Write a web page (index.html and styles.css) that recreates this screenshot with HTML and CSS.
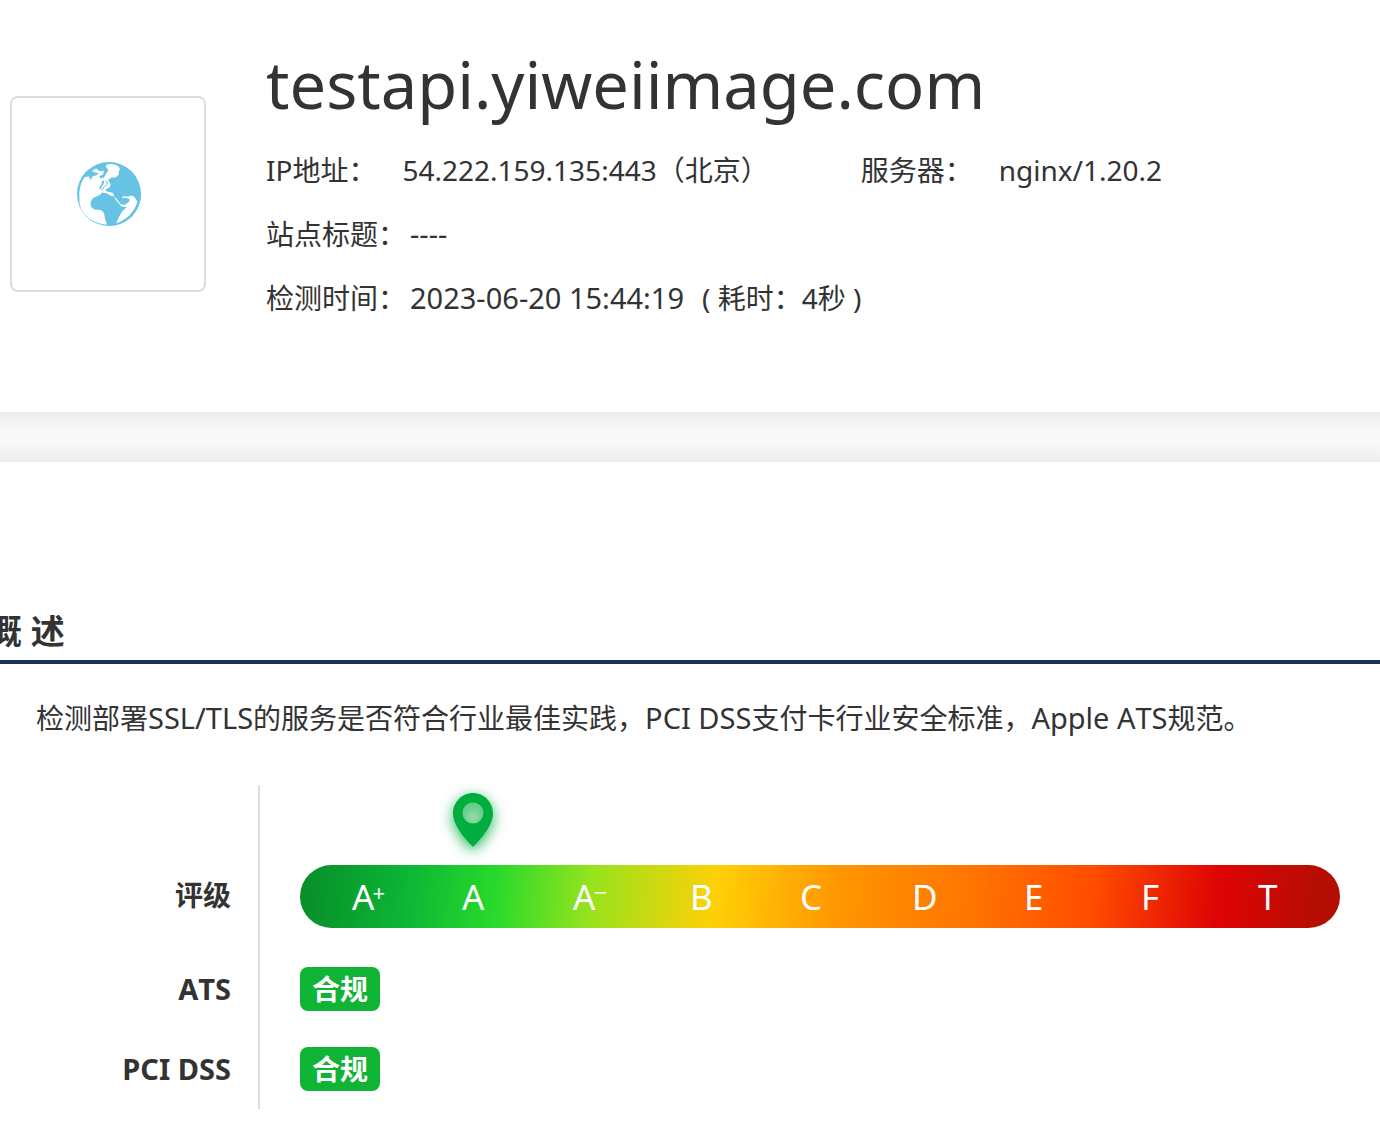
FILE: index.html
```html
<!DOCTYPE html>
<html lang="zh-CN">
<head>
<meta charset="utf-8">
<meta name="viewport" content="width=device-width, initial-scale=1">
<title>testapi.yiweiimage.com</title>
<link rel="stylesheet" href="styles.css">
</head>
<body>
<header class="panel site">
  <div class="site-icon">
    <svg class="globe" viewBox="0 0 64 64" role="img" aria-label="网站图标">
      <circle cx="32" cy="32" r="32" fill="#67c3e4"/>
      <path fill="#fff" d="M2.500 36C1.500 26 5 18.500 8 15L12 14.500L13.500 18L16 14L19 13.500L22 11L18 10.500L15 9L19 6.500L21.500 8.500L24 9.500L27 8.500L26 12.500L22 14.500L24 16.500L27 15.500L29.500 11L31.500 8L29.500 6L29 3L33 2L38 2.500L41.500 4.500L43 7L42 9L41.500 13L38.500 15.500L34.500 15.500L31 18L33.500 22L33 25L28 28L30 29.500L36 31L37.500 34.500L34 34L30.500 31.500L24.500 30.500L24 32L20.500 34L16 36L13.500 40L14 45L17.500 47.500L24 48L27 51L28 57L30 62.500C14 62 1 50 2.500 36Z"/>
      <path fill="#67c3e4" d="M25 19L27.500 18.500L26.500 22L23 28L22.500 25L24.500 22.500Z"/>
      <path fill="none" stroke="#67c3e4" stroke-width="1" d="M29 19L30.500 22L27 25L24.500 28"/>
      <path fill="#fff" d="M39 62C41 57 42.500 53 46 48.500L50 45L44.500 44.500L41.500 41L37 35.500L39 36L43.500 42L47 43L51.500 40.500L53 37.500L50 36L45 36L45.500 34.500L51 34.500L55 33.500L57.500 35L60.500 40L61.500 36C61 49 52 60 39 62Z"/>
      <path fill="#67c3e4" d="M62 30.500L64 30.500C64.500 49 50 64 32 64L31 62.500C48 62 61 49 62 30.500Z"/>
    </svg>
  </div>
  <div class="site-info">
    <h1 class="site-name">testapi.yiweiimage.com</h1>
    <dl class="facts">
      <div class="fact-row">
        <div class="fact fact-wide"><dt>IP地址：</dt><dd>54.222.159.135:443（北京）</dd></div>
        <div class="fact fact-wide"><dt>服务器：</dt><dd>nginx/1.20.2</dd></div>
      </div>
      <div class="fact-row">
        <div class="fact"><dt>站点标题：</dt><dd class="latin">----</dd></div>
      </div>
      <div class="fact-row">
        <div class="fact"><dt>检测时间：</dt><dd class="checked"><time class="latin" datetime="2023-06-20T15:44:19">2023-06-20 15:44:19</time><span>( 耗时：4秒 )</span></dd></div>
      </div>
    </dl>
  </div>
</header>

<main class="panel overview">
  <h2 class="section-title">概 述</h2>
  <p class="summary">检测部署<span class="latin">SSL/TLS</span>的服务是否符合行业最佳实践，<span class="latin">PCI DSS</span>支付卡行业安全标准，<span class="latin">Apple ATS</span>规范。</p>
  <dl class="results">
    <div class="result result-grade">
      <dt>评级</dt>
      <dd>
        <ol class="scale">
          <li>A<sup class="plus">+</sup></li>
          <li><span class="current">A
            <svg class="pin" viewBox="0 0 40 54" role="img" aria-label="当前评级">
              <path fill="#00ad3f" fill-rule="evenodd" d="M20 0C31 0 40 9 40 20.500C40 31 31 43 20 54C9 43 0 31 0 20.500C0 9 9 0 20 0ZM20 9.500A10.500 10.500 0 1 0 20 30.500A10.500 10.500 0 1 0 20 9.500Z"/>
              <circle cx="20" cy="20" r="10.500" fill="#00ad3f" fill-opacity=".15"/>
            </svg></span>
          </li>
          <li>A<sup class="minus">−</sup></li>
          <li>B</li>
          <li>C</li>
          <li>D</li>
          <li>E</li>
          <li>F</li>
          <li>T</li>
        </ol>
      </dd>
    </div>
    <div class="result"><dt class="latin">ATS</dt><dd><span class="badge">合规</span></dd></div>
    <div class="result"><dt class="latin">PCI DSS</dt><dd><span class="badge">合规</span></dd></div>
  </dl>
</main>
</body>
</html>
```
FILE: styles.css
```css
* {
  box-sizing: border-box;
}

body {
  margin: 0;
  background: #f9f9f9;
  color: #333;
  font-family: "Noto Sans", "Noto Sans CJK SC", sans-serif;
  font-size: 28px;
  line-height: 64px;
  overflow-x: hidden;
}

h1, h2, p, dl, dd, ol {
  margin: 0;
  padding: 0;
}

/* Latin runs are set a touch larger than the Chinese text around them */
.latin {
  font-size: 29px;
  font-kerning: none;
}

/* Panels bleed past both sides so that their shadow stays even */
.panel {
  margin: 0 -24px;
  background: #fff;
  box-shadow: 0 0 24px rgba(0, 0, 0, 0.11);
}

/* Site header */
.site {
  display: flex;
  align-items: flex-start;
  gap: 60px;
  margin-bottom: 50px;
  padding: 40px 34px 82px;
}

.site-icon {
  display: flex;
  flex: none;
  align-items: center;
  justify-content: center;
  width: 196px;
  height: 196px;
  margin-top: 56px;
  padding-left: 2px;
  border: 2px solid #ddd;
  border-radius: 8px;
}

.globe {
  width: 64px;
  height: 64px;
}

.site-name {
  margin-bottom: 10px;
  font-size: 65px;
  font-weight: 400;
  line-height: 88px;
}

.fact-row {
  display: flex;
  gap: 92px;
  height: 64px;
}

.fact {
  display: flex;
  gap: 4px;
  white-space: nowrap;
}

.fact-wide {
  gap: 26px;
}

.checked {
  display: flex;
  gap: 18px;
}

/* Overview */
.overview {
  padding: 140px 24px 60px;
}

.section-title {
  padding-left: 66px;
  border-bottom: 4px solid #1a2f5f;
  font-size: 34px;
  line-height: 58px;
  text-indent: -78px;
}

.summary {
  margin: 22px 36px 35px;
}

.result {
  display: flex;
}

.result dt {
  display: flex;
  flex: none;
  align-items: center;
  justify-content: flex-end;
  width: 260px;
  padding-right: 27px;
  border-right: 2px solid #ddd;
  font-weight: 700;
}

.result dd {
  display: flex;
  flex: 1;
  align-items: center;
  min-height: 80px;
  padding: 0 40px;
}

.result-grade dt {
  padding-top: 78px;
  padding-bottom: 22px;
}

.result-grade dd {
  padding-top: 80px;
  padding-bottom: 21px;
}

/* Column shares follow the uneven spacing of the grades on the colour bar */
.scale {
  display: grid;
  flex: 1;
  grid-template-columns: 110fr 111fr 117fr 110fr 112fr 112fr 117fr 117fr 82fr;
  height: 63px;
  padding-left: 52px;
  border-radius: 32px;
  background: linear-gradient(95deg, #08912a 1%, #0cb435 10%, #28da2b 19%, #96e31d 28%, #ffd006 40%, #ff9500 52%, #ff7300 65%, #ff4d00 76%, #df0404 88%, #b40e03 98%);
  color: #fff;
  font-size: 35px;
  line-height: 64px;
  list-style: none;
}

.scale sup {
  margin-left: -2px;
  font-size: 22px;
  line-height: 20px;
  vertical-align: 9px;
}

.scale .minus {
  font-size: 24px;
}

.current {
  display: inline-block;
  position: relative;
}

.pin {
  position: absolute;
  bottom: 100%;
  left: 50%;
  width: 40px;
  height: 54px;
  margin: 0 0 18px -20px;
  overflow: visible;
  filter: drop-shadow(0 4px 7px rgba(0, 173, 63, 0.9));
}

.badge {
  height: 44px;
  padding: 0 12px;
  border-radius: 8px;
  background: #10b434;
  color: #fff;
  font-weight: 700;
  line-height: 44px;
}
```
